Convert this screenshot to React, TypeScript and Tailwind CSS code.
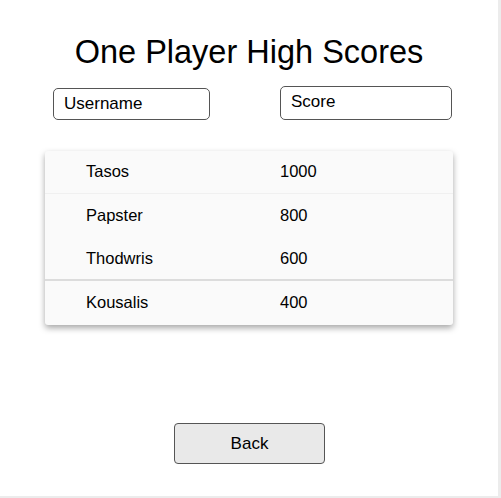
const rows = [
  { name: 'Tasos', score: 1000, line: 'border-b border-[#f0f0f0]' },
  { name: 'Papster', score: 800, line: '' },
  { name: 'Thodwris', score: 600, line: 'border-b-2 border-[#dcdcdc]' },
  { name: 'Kousalis', score: 400, line: '' },
]

export default function App() {
  return (
    <div className="w-[501px] h-[498px] bg-white font-['Liberation_Sans',Arial,sans-serif] text-black flex">
      <div className="flex-1 flex flex-col border-b-2 border-[#ececec]">
        <h1 className="text-[32.5px] leading-none text-center pt-[36px]">One Player High Scores</h1>

        <div className="flex items-end pl-[53px] mt-[17px]">
          <div className="w-[157px] h-[32px] border border-[#555] rounded-[5px] pl-[10px] flex items-center text-[17px]">
            Username
          </div>
          <div className="ml-[70px] w-[172px] h-[34px] border border-[#555] rounded-[5px] pl-[10px] flex items-center text-[17px] pb-[2px]">
            Score
          </div>
        </div>

        <div className="ml-[45px] mt-[31px] w-[408px] bg-[#fafafa] rounded-[3px] shadow-[0_3px_6px_rgba(0,0,0,0.35)]">
          {rows.map((r) => (
            <div key={r.name} className={`h-[43.5px] flex items-center text-[16.5px] ${r.line}`}>
              <span className="w-[235px] pl-[41px]">{r.name}</span>
              <span>{r.score}</span>
            </div>
          ))}
        </div>

        <div className="flex justify-center mt-auto mb-[32px] pl-[1px]">
          <button className="w-[151px] h-[41px] bg-[#e9e9e9] border border-[#555] rounded-[4px] text-[17px]">
            Back
          </button>
        </div>
      </div>
      <div className="w-[3px] bg-[#ececec]" />
    </div>
  )
}
